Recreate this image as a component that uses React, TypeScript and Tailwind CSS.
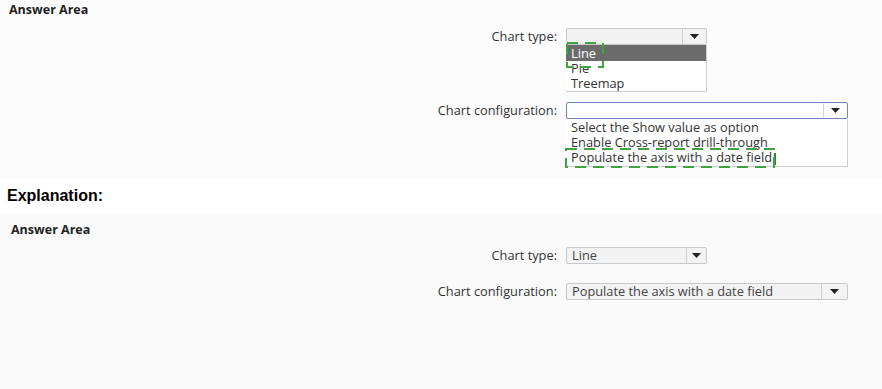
import React from 'react';

const Arrow = () => (
  <svg width="9" height="5" viewBox="0 0 9 5" className="block">
    <path d="M0 0 H9 L4.5 5 Z" fill="#222" />
  </svg>
);

// dashed green marker drawn over the chosen answer
const Marker = ({ w, h }: { w: number; h: number }) => (
  <svg width={w} height={h} className="absolute left-0 top-0 overflow-visible pointer-events-none">
    <rect
      x="1"
      y="1"
      width={w - 2}
      height={h - 2}
      fill="none"
      stroke="#3fa33f"
      strokeWidth="2"
      strokeDasharray="11 7"
    />
  </svg>
);

const Row = ({ label, children }: { label: string; children: React.ReactNode }) => (
  <div className="flex items-start">
    <div className="w-[558px] shrink-0 text-right pr-[1px] text-[12.8px] leading-[16px] text-[#333]">{label}</div>
    <div className="ml-[8px]">{children}</div>
  </div>
);

const Select = ({
  value,
  width,
  split,
  focused,
}: {
  value?: string;
  width: number;
  split: number;
  focused?: boolean;
}) => (
  <div
    className={`flex h-[17px] items-stretch rounded-[2px] border ${
      focused ? 'border-[#7085b9] bg-white' : 'border-[#c9c9c9] bg-[#f3f3f3]'
    }`}
    style={{ width }}
  >
    <div className="flex-1 pl-[5px] text-[12.8px] leading-[15px] text-[#444]">{value}</div>
    <div
      className={`flex items-center justify-center border-l ${focused ? 'border-[#d5d5d5]' : 'border-[#d0d0d0]'}`}
      style={{ width: width - split }}
    >
      <Arrow />
    </div>
  </div>
);

const App = () => {
  return (
    <div className="w-[882px] h-[389px] overflow-hidden bg-white" style={{ fontFamily: '"Open Sans", sans-serif' }}>
      {/* question */}
      <div className="h-[178px] bg-[#fcfcfc] pl-[9px] pt-[2px]">
        <div className="text-[12.5px] leading-[16px] font-bold text-[#1e1e1e]">Answer Area</div>

        <div className="mt-[10px] -ml-[9px]">
          <Row label="Chart type:">
            <Select width={141} split={117} />
            <div className="relative w-[141px] border-r border-b border-[#cfcfcf] bg-white">
              <div className="bg-[#6b6b6b] pl-[5px] text-[12.8px] leading-[16px] text-white">Line</div>
              <div className="pl-[5px] text-[12.8px] leading-[15px] text-[#333]">Pie</div>
              <div className="pl-[5px] text-[12.8px] leading-[15px] text-[#333]">Treemap</div>
              <div className="absolute left-[0px] top-[-3px]">
                <Marker w={38} h={26} />
              </div>
            </div>
          </Row>
        </div>

        <div className="mt-[10px] -ml-[9px]">
          <Row label="Chart configuration:">
            <Select width={282} split={258} focused />
            <div className="relative w-[282px] border-r border-b border-[#cfcfcf] bg-white pt-[1px] pb-[1px]">
              <div className="pl-[5px] text-[12.8px] leading-[15px] text-[#333]">Select the Show value as option</div>
              <div className="pl-[5px] text-[12.8px] leading-[15px] text-[#333]">Enable Cross-report drill-through</div>
              <div className="pl-[5px] text-[12.8px] leading-[15px] text-[#333]">
                Populate the axis with a date field<span className="ml-[2px] inline-block h-[12px] w-[2px] bg-[#2d8a2d] align-middle" />
              </div>
              <div className="absolute left-[-1px] top-[29px]">
                <Marker w={210} h={20} />
              </div>
            </div>
          </Row>
        </div>
      </div>

      {/* explanation */}
      <div className="h-[37px] bg-white pl-[7px] pt-[9px]">
        <div className="text-[16px] leading-[18px] font-bold text-black" style={{ fontFamily: '"Liberation Sans", Arial, sans-serif' }}>
          Explanation:
        </div>
      </div>

      {/* answer */}
      <div className="h-[174px] bg-[#fafafa] pl-[11px] pt-[7px]">
        <div className="text-[12.5px] leading-[16px] font-bold text-[#222]">Answer Area</div>

        <div className="mt-[9px] -ml-[11px]">
          <Row label="Chart type:">
            <Select value="Line" width={141} split={121} />
          </Row>
        </div>

        <div className="mt-[19px] -ml-[11px]">
          <Row label="Chart configuration:">
            <Select value="Populate the axis with a date field" width={282} split={256} />
          </Row>
        </div>
      </div>
    </div>
  );
};

export default App;
